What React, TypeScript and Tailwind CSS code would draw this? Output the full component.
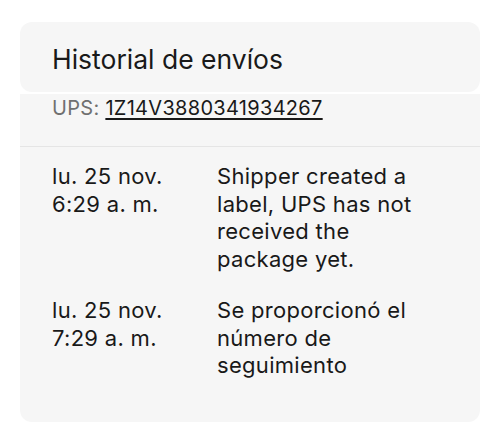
const events = [
  { date: 'lu. 25 nov.', time: '6:29 a. m.', text: 'Shipper created a label, UPS has not received the package yet.' },
  { date: 'lu. 25 nov.', time: '7:29 a. m.', text: 'Se proporcionó el número de seguimiento' },
];

export default function App() {
  return (
    <div className="w-[500px] h-[431px] bg-white px-5 pt-[22px] font-['Inter',sans-serif] text-[#191919]">
      <div className="h-[70px] rounded-xl bg-[#f6f6f6] px-8 pt-[22px]">
        <h2 className="text-[26.5px] leading-[31px]">Historial de envíos</h2>
      </div>
      <div className="mt-[2px] rounded-b-xl bg-[#f6f6f6] pb-[42px]">
        <div className="px-8 pt-[2px] pb-[26px] text-[20px] leading-[24px] tracking-[0.3px]">
          <span className="text-[#707070]">UPS: </span>
          <span className="underline underline-offset-[3px] decoration-[1.5px]">1Z14V3880341934267</span>
        </div>
        <div className="border-t border-[#e5e5e5]" />
        <div className="px-8 pt-[16px] flex flex-col gap-[24px]">
          {events.map((e, i) => (
            <div key={i} className="flex text-[22px] leading-[27.5px] tracking-[0.3px]">
              <div className="w-[165px] shrink-0">
                <div>{e.date}</div>
                <div>{e.time}</div>
              </div>
              <p className="w-[215px]">{e.text}</p>
            </div>
          ))}
        </div>
      </div>
    </div>
  );
}
